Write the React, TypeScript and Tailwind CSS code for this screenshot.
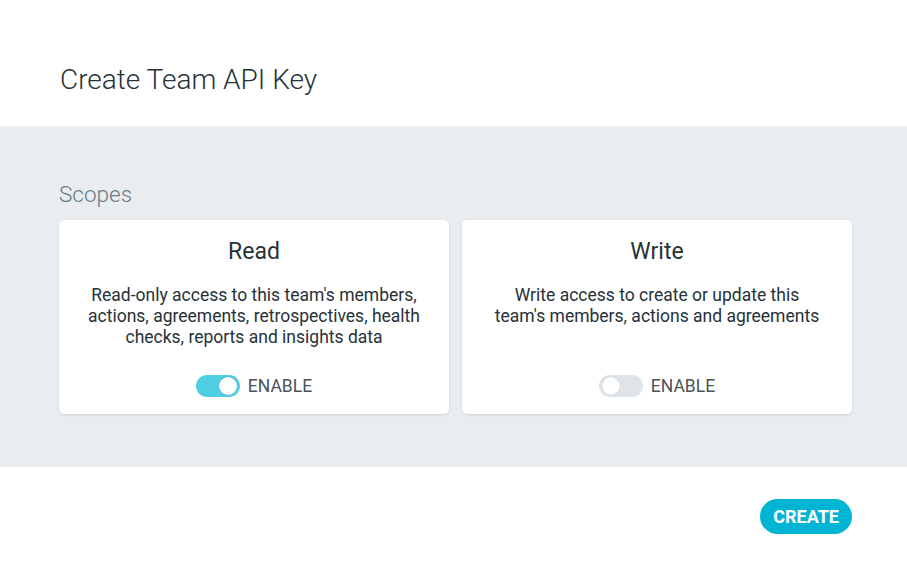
import React, { useState } from "react";

type ScopeProps = {
  title: string;
  description: string;
  enabled: boolean;
  onToggle: () => void;
};

function Toggle({ on, onClick }: { on: boolean; onClick: () => void }) {
  return (
    <button
      type="button"
      onClick={onClick}
      className={`relative h-[22px] w-[44px] rounded-full ${on ? "bg-[#4fcfe2]" : "bg-[#dfe4e8]"}`}
    >
      <span
        className={`absolute top-[2px] h-[18px] w-[18px] rounded-full bg-white shadow-[0_0_1px_rgba(0,0,0,0.3)] ${on ? "left-[23px]" : "left-[3px]"}`}
      />
    </button>
  );
}

function ScopeCard({ title, description, enabled, onToggle }: ScopeProps) {
  return (
    <div className="flex h-[194px] flex-1 flex-col items-center rounded-[5px] bg-white px-4 pb-[17px] pt-[17px] text-center shadow-[0_1px_3px_rgba(0,0,0,0.12)]">
      <div className="text-[23px] leading-[30px] text-[#263238]">{title}</div>
      <p className="mt-[18px] max-w-[336px] text-[17.5px] leading-[21px] text-[#263238]">
        {description}
      </p>
      <div className="mt-auto flex items-center gap-[8px]">
        <Toggle on={enabled} onClick={onToggle} />
        <span className="text-[17.5px] leading-[22px] text-[#4a5359]">ENABLE</span>
      </div>
    </div>
  );
}

export default function App() {
  const [read, setRead] = useState(true);
  const [write, setWrite] = useState(false);

  return (
    <div
      className="flex h-[562px] w-full flex-col bg-white"
      style={{ fontFamily: "Roboto, 'Noto Sans', sans-serif" }}
    >
      <header className="flex h-[126px] items-start pl-[60px] pt-[62px]">
        <h1 className="text-[28px] font-light leading-[36px] text-[#263238]">
          Create Team API Key
        </h1>
      </header>

      <section className="flex h-[341px] flex-col bg-[#e9edf0] pl-[59px] pr-[55px] pt-[54px]">
        <h2 className="text-[22.5px] font-light leading-[28px] text-[#687b89]">Scopes</h2>
        <div className="mt-[12px] flex gap-[13px]">
          <ScopeCard
            title="Read"
            description="Read-only access to this team's members, actions, agreements, retrospectives, health checks, reports and insights data"
            enabled={read}
            onToggle={() => setRead(!read)}
          />
          <ScopeCard
            title="Write"
            description="Write access to create or update this team's members, actions and agreements"
            enabled={write}
            onToggle={() => setWrite(!write)}
          />
        </div>
      </section>

      <footer className="flex justify-end pr-[55px] pt-[32px]">
        <button
          type="button"
          className="h-[35px] rounded-full bg-[#00b5d4] px-[13px] text-[18px] font-bold text-white"
        >
          CREATE
        </button>
      </footer>
    </div>
  );
}
